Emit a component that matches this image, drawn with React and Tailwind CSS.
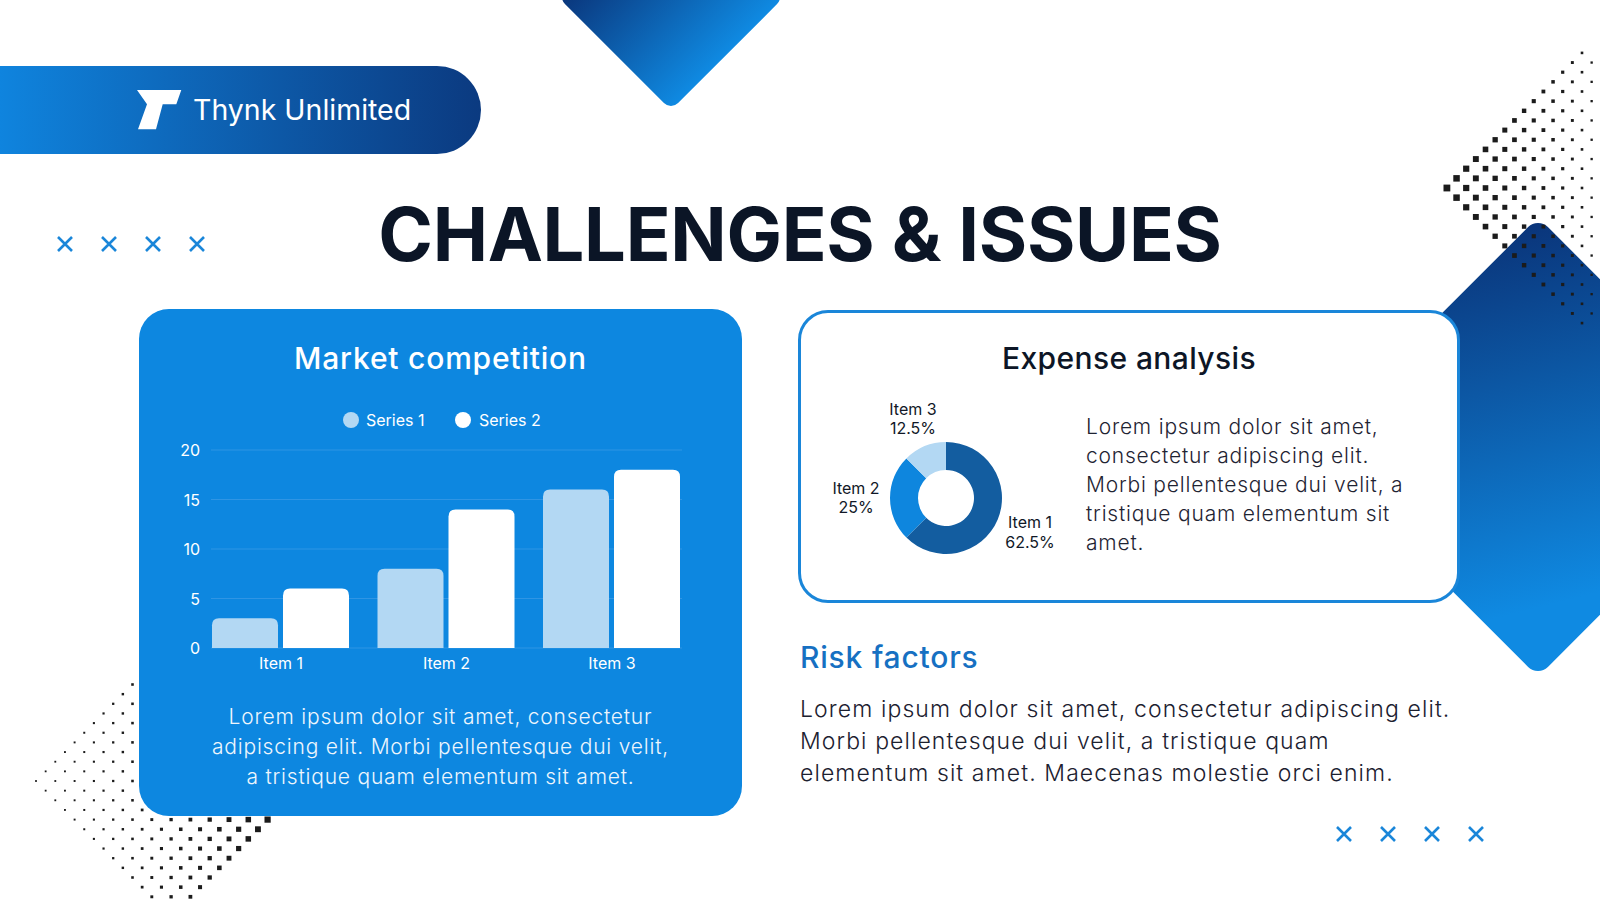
import React from "react";

const DOT_STEP = 9.65;

// lattice of square dots, top-right cluster (diamond centred at 1582,188)
function topRightDots() {
  const out = [];
  for (let i = -14; i <= 2; i++) {
    for (let j = -14; j <= 14; j++) {
      if ((i + j) & 1) continue;
      const dx = i * DOT_STEP;
      const dy = j * DOT_STEP;
      if (Math.abs(dx) + Math.abs(dy) > 136) continue;
      const x = 1582 + dx;
      const y = 188 + dy;
      if (x > 1598) continue;
      const size = 6.8 - ((x - 1447) / 145) * 4.5;
      out.push({ x, y, size });
    }
  }
  return out;
}

// bottom-left cluster, a tilted rectangle starting at 36,781
function bottomLeftDots() {
  const out = [];
  for (let i = 0; i <= 26; i++) {
    for (let j = -12; j <= 16; j++) {
      const a = i + j;
      const b = i - j;
      if (a & 1) continue;
      if (a < 0 || a > 28 || b < 0 || b > 20) continue;
      const x = 36 + i * DOT_STEP;
      const y = 781 + j * DOT_STEP;
      const t = (x - 36) / 231;
      const size = 1.8 + 4.4 * t * t;
      out.push({ x, y, size });
    }
  }
  return out;
}

function Backdrop() {
  const dots = [...topRightDots(), ...bottomLeftDots()];
  return (
    <svg
      className="pointer-events-none absolute inset-0"
      width="1600"
      height="900"
      viewBox="0 0 1600 900"
    >
      <defs>
        <linearGradient id="bigDiamond" x1="0" y1="0" x2="1" y2="0.6">
          <stop offset="0" stopColor="#0a3479" />
          <stop offset="1" stopColor="#0f8ae2" />
        </linearGradient>
        <linearGradient id="topDiamond" x1="0" y1="0" x2="1" y2="0">
          <stop offset="0" stopColor="#0a3479" />
          <stop offset="1" stopColor="#0f8ae2" />
        </linearGradient>
      </defs>
      <rect
        x={671 - 80}
        y={-3 - 80}
        width="160"
        height="160"
        rx="10"
        transform="rotate(45 671 -3)"
        fill="url(#topDiamond)"
      />
      <rect
        x={1538 - 162.5}
        y={447 - 162.5}
        width="325"
        height="325"
        rx="14"
        transform="rotate(45 1538 447)"
        fill="url(#bigDiamond)"
      />
      {dots.map((d, k) => (
        <rect
          key={k}
          x={d.x - d.size / 2}
          y={d.y - d.size / 2}
          width={d.size}
          height={d.size}
          fill="#1b1b1b"
        />
      ))}
    </svg>
  );
}

function Logo() {
  return (
    <svg width="45" height="40" viewBox="0 0 45 40">
      <polygon
        points="0,0 44.3,0 39.3,14.3 25.7,14.3 19,39.3 1,39.3 10,14.3"
        fill="#ffffff"
      />
    </svg>
  );
}

function Cross() {
  return (
    <svg width="18" height="18" viewBox="0 0 18 18">
      <path d="M2 2 L16 16 M16 2 L2 16" stroke="#1a86d9" strokeWidth="2.6" />
    </svg>
  );
}

function Crosses({ className }) {
  return (
    <div className={`flex gap-[26px] ${className}`}>
      <Cross />
      <Cross />
      <Cross />
      <Cross />
    </div>
  );
}

const series = [
  [3, 6],
  [8, 14],
  [16, 18],
];

function barPath(x, w, top, bottom, r) {
  return `M${x},${bottom} V${top + r} Q${x},${top} ${x + r},${top} H${x + w - r} Q${x + w},${top} ${x + w},${top + r} V${bottom} Z`;
}

function BarChart() {
  const base = 339;
  const unit = 9.9;
  return (
    <svg width="603" height="275" viewBox="0 95 603 275" className="block">
      <circle cx="212" cy="111" r="8" fill="#b3d8f3" />
      <text x="227" y="111" dominantBaseline="central" fontSize="16" fill="#ffffff">
        Series 1
      </text>
      <circle cx="324" cy="111" r="8" fill="#ffffff" />
      <text x="340" y="111" dominantBaseline="central" fontSize="16" fill="#ffffff">
        Series 2
      </text>
      {[0, 5, 10, 15, 20].map((v) => (
        <g key={v}>
          <line
            x1="72"
            x2="543"
            y1={base - v * unit}
            y2={base - v * unit}
            stroke="#2f95e4"
            strokeWidth="1"
          />
          <text
            x="61"
            y={base - v * unit}
            textAnchor="end"
            dominantBaseline="central"
            fontSize="16"
            fill="#ffffff"
          >
            {v}
          </text>
        </g>
      ))}
      {series.map((pair, k) =>
        pair.map((v, s) => {
          const x = 73 + k * 165.5 + s * 71;
          return (
            <path
              key={`${k}-${s}`}
              d={barPath(x, 66, base - v * unit, base, 7)}
              fill={s === 0 ? "#b3d8f3" : "#ffffff"}
            />
          );
        })
      )}
      {["Item 1", "Item 2", "Item 3"].map((t, k) => (
        <text
          key={t}
          x={142 + k * 165.5}
          y="354"
          textAnchor="middle"
          dominantBaseline="central"
          fontSize="16"
          fill="#ffffff"
        >
          {t}
        </text>
      ))}
    </svg>
  );
}

function arc(cx, cy, r0, r1, a0, a1) {
  const p = (r, a) => {
    const rad = ((a - 90) * Math.PI) / 180;
    return `${cx + r * Math.cos(rad)},${cy + r * Math.sin(rad)}`;
  };
  const large = a1 - a0 > 180 ? 1 : 0;
  return `M${p(r1, a0)} A${r1},${r1} 0 ${large} 1 ${p(r1, a1)} L${p(r0, a1)} A${r0},${r0} 0 ${large} 0 ${p(r0, a0)} Z`;
}

function Donut() {
  const cx = 148;
  const cy = 188;
  const label = { fontSize: 16, fill: "#111827", textAnchor: "middle", dominantBaseline: "central" };
  return (
    <svg width="270" height="165" viewBox="3 85 270 165" className="block shrink-0">
      <path d={arc(cx, cy, 28, 56, 0, 225)} fill="#135da0" />
      <path d={arc(cx, cy, 28, 56, 225, 315)} fill="#0e86de" />
      <path d={arc(cx, cy, 28, 56, 315, 360)} fill="#b3d8f3" />
      <text x="115" y="99" {...label}>Item 3</text>
      <text x="115" y="118" {...label}>12.5%</text>
      <text x="58" y="178" {...label}>Item 2</text>
      <text x="58" y="197" {...label}>25%</text>
      <text x="232" y="212" {...label}>Item 1</text>
      <text x="232" y="232" {...label}>62.5%</text>
    </svg>
  );
}

function MarketCard() {
  return (
    <section className="flex h-[507px] w-[603px] shrink-0 flex-col items-center rounded-[30px] bg-[#0d87e0] pt-[31px]">
      <h2 className="text-[30px] leading-[36px] font-medium tracking-[0.8px] text-white">
        Market competition
      </h2>
      <div className="mt-[28px]">
        <BarChart />
      </div>
      <p className="mt-[23px] text-center text-[21px] leading-[30px] font-light tracking-[0.8px] text-[#eef6fd]">
        Lorem ipsum dolor sit amet, consectetur
        <br />
        adipiscing elit. Morbi pellentesque dui velit,
        <br />
        a tristique quam elementum sit amet.
      </p>
    </section>
  );
}

function ExpenseCard() {
  return (
    <section className="h-[293px] w-[662px] rounded-[30px] border-[3px] border-[#1a86d9] bg-white pt-[27px]">
      <h2 className="text-center text-[30px] leading-[36px] font-medium tracking-[0.4px] text-[#0d1626]">
        Expense analysis
      </h2>
      <div className="mt-[19px] flex items-start">
        <Donut />
        <p className="mt-[17px] ml-[15px] text-[21px] leading-[29px] font-light tracking-[0.8px] text-[#1f2433]">
          Lorem ipsum dolor sit amet,
          <br />
          consectetur adipiscing elit.
          <br />
          Morbi pellentesque dui velit, a
          <br />
          tristique quam elementum sit
          <br />
          amet.
        </p>
      </div>
    </section>
  );
}

export default function App() {
  return (
    <div className="relative h-[900px] w-[1600px] overflow-hidden bg-white font-['Inter',sans-serif]">
      <Backdrop />
      <div className="relative flex flex-col">
        <header className="mt-[66px] flex h-[88px] w-[481px] items-center rounded-r-full bg-linear-to-r from-[#0f84de] to-[#0b3a80] pl-[137px]">
          <Logo />
          <span className="ml-[11px] text-[28.5px] text-white">Thynk Unlimited</span>
        </header>

        <div className="mt-[43px] grid grid-cols-[1fr_auto_1fr] items-start">
          <Crosses className="mt-[38px] pl-[56px]" />
          <h1 className="text-[74px] leading-none font-bold tracking-[-0.3px] text-[#0b1526]">
            CHALLENGES &amp; ISSUES
          </h1>
          <div />
        </div>

        <div className="mt-[38px] flex gap-[56px] pl-[139px]">
          <MarketCard />
          <div className="flex w-[690px] flex-col pt-[1px]">
            <ExpenseCard />
            <h2 className="mt-[36px] pl-[2px] text-[30px] leading-[36px] font-medium tracking-[0.8px] text-[#1670c2]">
              Risk factors
            </h2>
            <p className="mt-[18px] pl-[2px] text-[23px] leading-[32px] font-light tracking-[1.1px] text-[#1c2130]">
              Lorem ipsum dolor sit amet, consectetur adipiscing elit.
              <br />
              Morbi pellentesque dui velit, a tristique quam
              <br />
              elementum sit amet. Maecenas molestie orci enim.
            </p>
            <Crosses className="mt-[36px] justify-end pr-[3px]" />
          </div>
        </div>
      </div>
    </div>
  );
}
